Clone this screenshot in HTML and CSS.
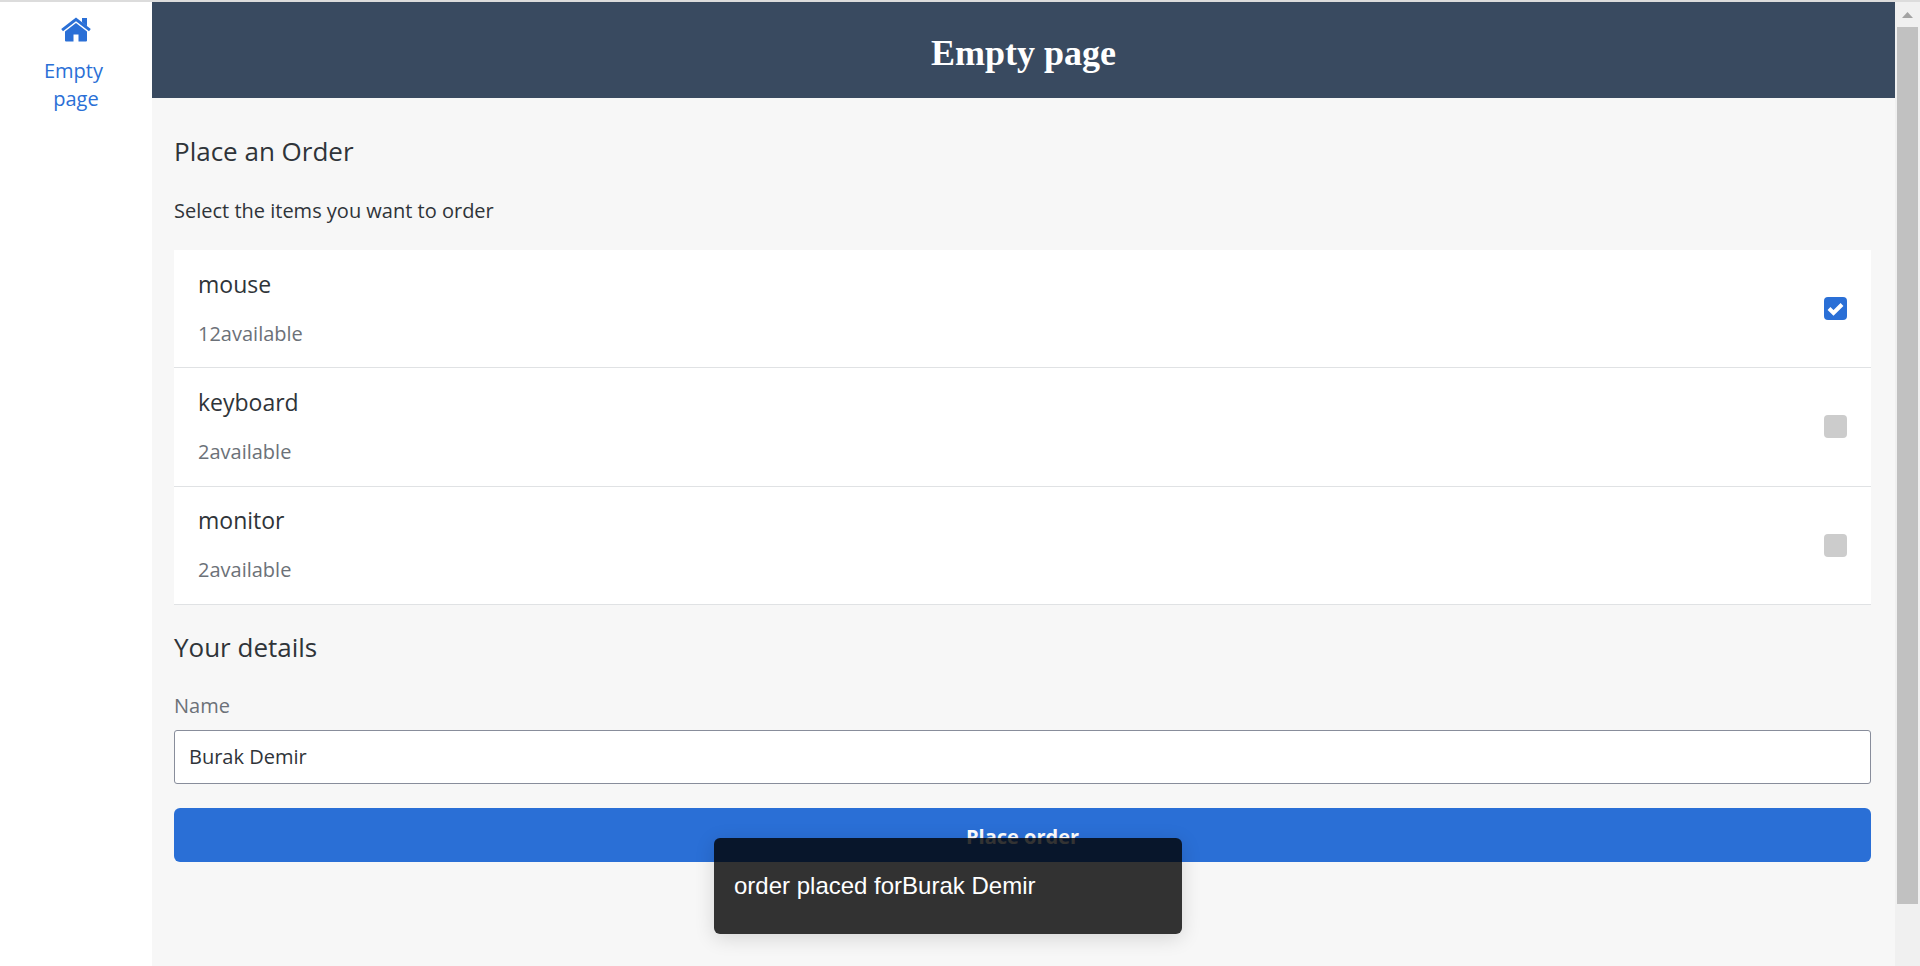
FILE: index.html
```html
<!DOCTYPE html>
<html lang="en">
<head>
<meta charset="utf-8">
<title>Empty page</title>
<link rel="stylesheet" href="styles.css">
</head>
<body>
<div class="app">
  <nav class="sidebar">
    <a class="nav-link" href="#">
      <svg class="home" viewBox="0 0 30 25" aria-hidden="true">
        <path d="M21 1h5v8l-5-4zM15 .6 29.8 12 28 14.3 15 4.300 2 14.300 .2 12z"/>
        <path d="M15 6 26 14.500V23.500q0 1-1 1h-7.500v-7h-5v7H5q-1 0-1-1v-9z"/>
      </svg>
      <span class="nav-text">Empty <br>page</span>
    </a>
  </nav>
  <div class="page">
    <header class="header"><h1 class="title">Empty page</h1></header>
    <main class="content">
      <h2 class="heading">Place an Order</h2>
      <p class="intro">Select the items you want to order</p>
      <ul class="items">
        <li class="item">
          <label class="item-label" for="mouse"><span class="item-name">mouse</span><span class="stock">12available</span></label>
          <span class="tick"><input class="box" type="checkbox" id="mouse" checked><svg class="mark" viewBox="0 0 23 23" aria-hidden="true"><path d="M5 11.500 9.500 16 18 7.500"/></svg></span>
        </li>
        <li class="item">
          <label class="item-label" for="keyboard"><span class="item-name">keyboard</span><span class="stock">2available</span></label>
          <span class="tick"><input class="box" type="checkbox" id="keyboard"></span>
        </li>
        <li class="item">
          <label class="item-label" for="monitor"><span class="item-name">monitor</span><span class="stock">2available</span></label>
          <span class="tick"><input class="box" type="checkbox" id="monitor"></span>
        </li>
      </ul>
      <h2 class="heading">Your details</h2>
      <label class="field-label" for="name">Name</label>
      <input class="field" type="text" id="name" value="Burak Demir">
      <button class="submit" type="button">Place order</button>
    </main>
  </div>
  <div class="scrollbar" aria-hidden="true">
    <svg class="arrow" viewBox="0 0 11 6"><path d="M5.500 0 11 6H0z"/></svg>
    <div class="thumb"></div>
  </div>
  <div class="toast" role="status">order placed forBurak Demir</div>
</div>
</body>
</html>
```
FILE: styles.css
```css
* { box-sizing: border-box; }
body {
  margin: 0;
  color: #2f3439;
  font-family: "Open Sans", "Noto Sans", sans-serif;
  font-size: 20px;
  line-height: 28px;
}
.app {
  position: relative;
  display: flex;
  min-height: 100vh;
  border-top: 2px solid #dcdcdc;
  background: #fff;
}
.sidebar { width: 152px; padding-top: 15px; }
.nav-link {
  display: flex;
  flex-direction: column;
  align-items: center;
  gap: 15px;
  color: #2a6fd6;
  text-decoration: none;
}
.home { width: 30px; height: 25px; fill: #2a6fd6; }
.nav-text { text-align: center; white-space: pre-wrap; }
.page { flex: 1; background: #f7f7f7; }
.header {
  display: flex;
  align-items: center;
  justify-content: center;
  height: 96px;
  padding-top: 6px;
  background: #394a60;
  color: #fff;
}
.title { margin: 0; font: bold 36px/44px "Liberation Serif", serif; }
.content { display: flex; flex-direction: column; padding: 35px 24px 36px 22px; }
.heading { margin: 0; font-size: 26px; font-weight: 400; line-height: 36px; }
.intro { margin: 28px 0 25px; }
.items {
  display: grid;
  grid-auto-rows: 1fr;
  min-height: 355px;
  margin: 0 0 24px;
  padding: 0;
  list-style: none;
}
.item {
  display: flex;
  align-items: center;
  justify-content: space-between;
  padding: 0 24px;
  border-bottom: 1px solid #e0e2e4;
  background: #fff;
}
.item-label { display: flex; flex-direction: column; gap: 20px; padding-bottom: 2px; }
.item-name { font-size: 23px; line-height: 32px; }
.stock { color: #6c7178; }
.tick { position: relative; width: 23px; height: 23px; }
.box {
  display: block;
  width: 23px;
  height: 23px;
  margin: 0;
  border-radius: 4px;
  background: #ccc;
  appearance: none;
}
.box:checked { background: #2a6fd6; }
.mark {
  position: absolute;
  inset: 0;
  fill: none;
  stroke: #fff;
  stroke-width: 4;
  pointer-events: none;
}
.field-label { margin: 27px 0 10px; color: #6c7178; }
.field {
  height: 54px;
  padding: 0 14px 2px;
  border: 1px solid #888d9b;
  border-radius: 3px;
  background: #fff;
  color: inherit;
  font: inherit;
}
.submit {
  height: 54px;
  margin-top: 24px;
  padding: 4px 0 0;
  border: 0;
  border-radius: 6px;
  background: #2a6fd6;
  color: #fff;
  font: bold 20px/28px "Open Sans", "Noto Sans", sans-serif;
}
.toast {
  position: absolute;
  bottom: 32px;
  left: 50%;
  width: 468px;
  margin-left: -246px;
  padding: 34px 20px;
  border-radius: 6px;
  background: rgba(0, 0, 0, .8);
  box-shadow: 0 4px 20px rgba(0, 0, 0, .14);
  color: #fff;
  font: 24px/28px "Liberation Sans", Arial, sans-serif;
}
.scrollbar {
  display: flex;
  flex-direction: column;
  align-items: center;
  gap: 9px;
  width: 25px;
  padding: 10px 2px 62px;
  background: #f0f0f0;
}
.arrow { width: 11px; height: 6px; fill: #a3a3a3; }
.thumb { flex: 1; width: 21px; background: #c1c1c1; }
```
